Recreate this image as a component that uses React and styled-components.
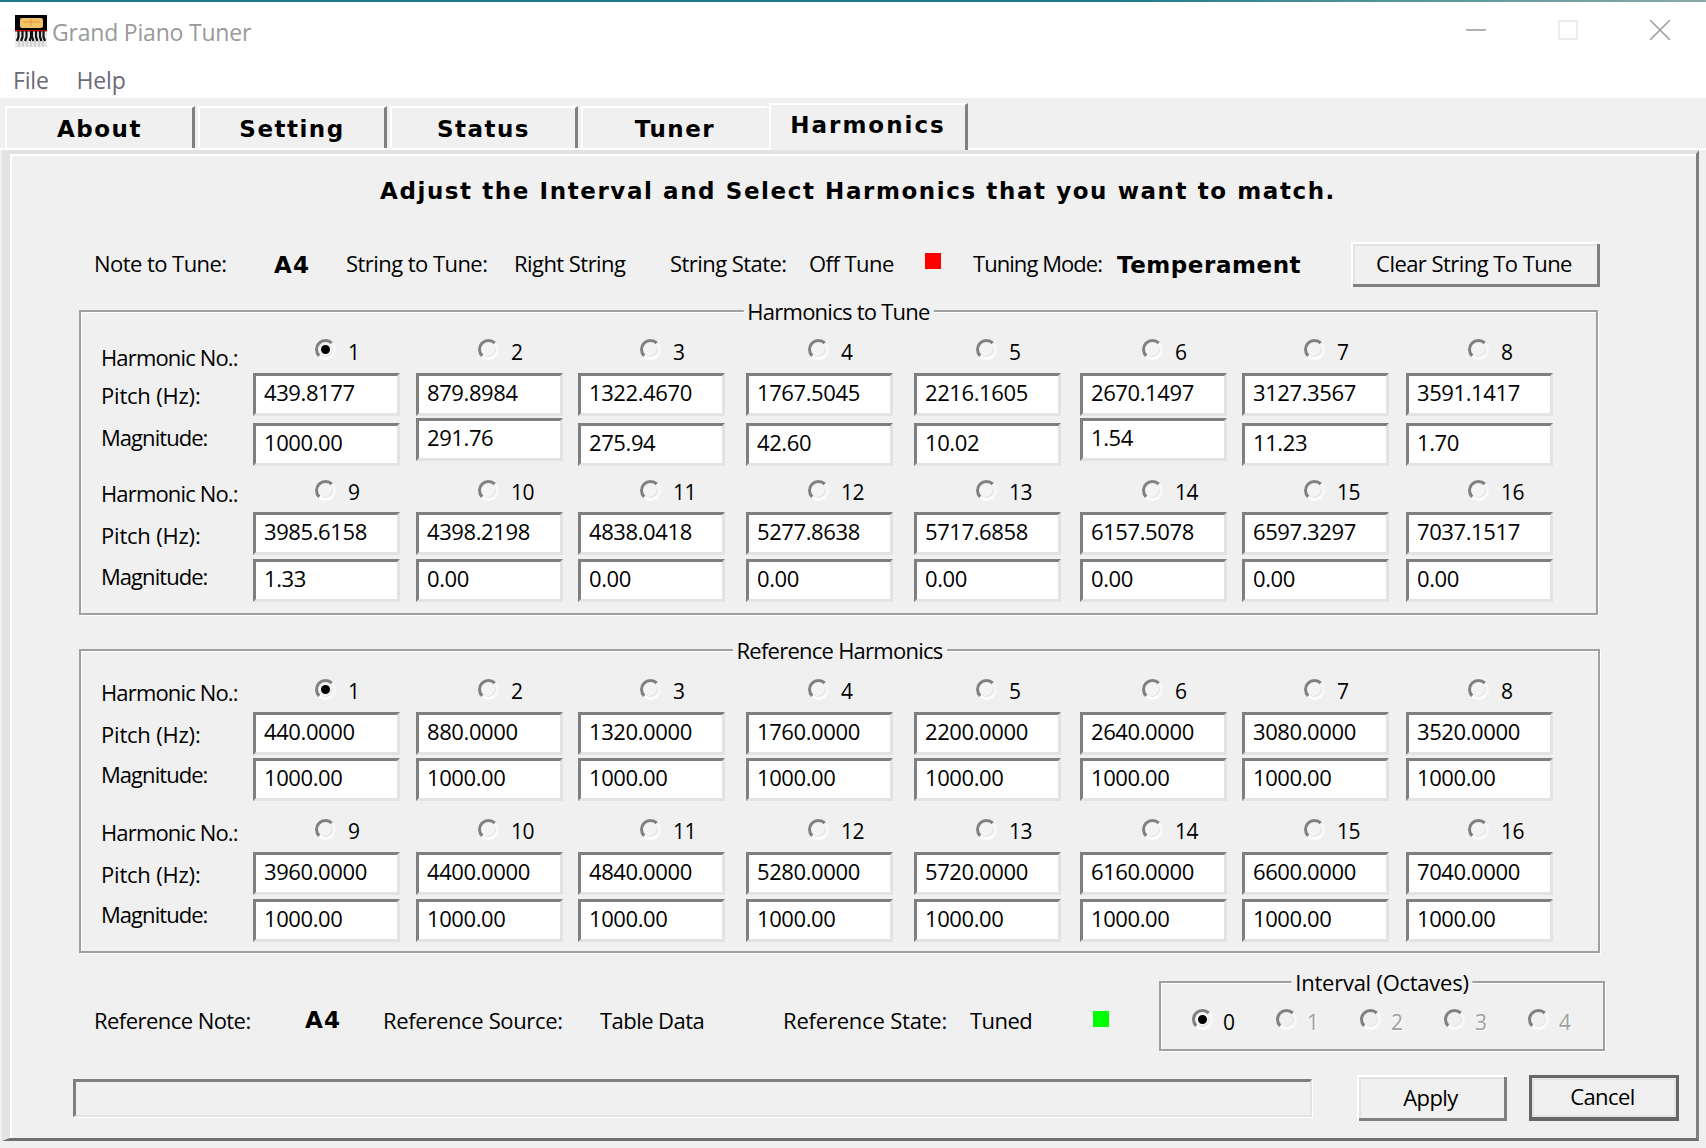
import React from "react";
import styled, { createGlobalStyle } from "styled-components";

const Global = createGlobalStyle`
  html, body { margin: 0; padding: 0; background: #f0f0f0; }
  body { width: 1706px; height: 1148px; overflow: hidden; font-family: "Open Sans", "Liberation Sans", sans-serif; color: #000; }
  * { box-sizing: border-box; }
`;

const TopStrip = styled.div`
  height: 2px;
  background: linear-gradient(90deg, #1c7a8c 0%, #1c7a8c 65%, #4a8f97 78%, #8aa9a8 100%);
`;
const TitleRow = styled.div`
  height: 60px; background: #fff; display: flex; align-items: flex-start; padding: 13px 36px 0 15px;
`;
const AppTitle = styled.div`
  margin-left: 5px; font-size: 23px; line-height: 34px; color: #999; letter-spacing: -0.2px;
`;
const Controls = styled.div`
  margin-left: auto; display: flex; gap: 72px; padding-top: 5px;
`;
const MenuRow = styled.div`
  height: 36px; background: #fff; display: flex; gap: 28px; padding-left: 13px; align-items: center;
`;
const MenuItem = styled.span` font-size: 23px; color: #6a6a78; letter-spacing: -0.2px; `;

const TabBar = styled.div`
  height: 52px; display: flex; align-items: flex-end; padding-left: 5px; border-bottom: 2px solid #fff; position: relative;
`;
const Tab = styled.div`
  width: ${p => p.$w}px; height: ${p => (p.$active ? 47 : 42)}px; margin-right: ${p => p.$gap}px;
  margin-bottom: ${p => (p.$active ? -2 : 0)}px; padding-bottom: ${p => (p.$active ? 5 : 0)}px; padding-top: ${p => (p.$active ? 0 : 2)}px;
  position: relative; z-index: 1;
  background: #f0f0f0;
  border-top: 2px solid #fff; border-left: 2px solid #fff;
  border-right: ${p => (p.$plain ? "0" : "3px solid #808080")};
  display: flex; align-items: center; justify-content: center;
  font-family: "DejaVu Sans", sans-serif; font-weight: 700; font-size: 23px; letter-spacing: ${p => (p.$active ? 2 : 1.5)}px;
`;

const Panel = styled.div`
  margin-left: 2px; width: 1697px; height: 991px;
  border-left: 8px solid #e3e3e3; border-top: 4px solid #e3e3e3;
  border-right: 3px solid #808080; border-bottom: 3px solid #6e6e6e;
  box-shadow: inset 2px 2px 0 #fff;
  display: flex; flex-direction: column;
`;
const Heading = styled.div`
  height: 88px; padding-top: 17px; margin-left: 370px; font-family: "DejaVu Sans", sans-serif; font-weight: 700;
  font-size: 23px; line-height: 40px; letter-spacing: 1.58px; white-space: nowrap;
`;
const InfoRow = styled.div`
  display: grid; grid-template-columns: ${p => p.$cols}; align-items: center; padding-left: 84px; height: ${p => p.$h}px;
  margin-top: ${p => p.$mt || 0}px;
`;
const Text = styled.div`
  font-size: 22px; line-height: 30px; letter-spacing: ${p => (p.$ls !== undefined ? p.$ls : -0.55)}px; white-space: nowrap; margin-top: ${p => p.$top || 0}px;
`;
const Strong = styled.div`
  font-family: "DejaVu Sans", sans-serif; font-weight: 700; font-size: 23px; line-height: 30px;
  letter-spacing: ${p => (p.$ls !== undefined ? p.$ls : 1.1)}px; white-space: nowrap; margin-top: ${p => p.$top || 0}px;
`;
const Lamp = styled.div`
  width: 16px; height: 16px; background: ${p => p.$color}; margin-top: ${p => p.$top || 0}px;
`;
const Button = styled.div`
  width: ${p => p.$w}px; height: ${p => p.$h}px; margin-left: ${p => p.$ml || 0}px;
  display: flex; align-items: center; justify-content: center; background: #f0f0f0;
  font-size: 22px; letter-spacing: -0.55px; padding-bottom: 3px; padding-right: 3px;
  border: ${p => (p.$default ? "3px solid #666" : "0")};
  border-bottom-width: ${p => (p.$default ? 4 : 0)}px;
  box-shadow: ${p => (p.$default
    ? "inset 2px 2px 0 #e3e3e3, inset -2px -2px 0 #e3e3e3"
    : "inset 2px 2px 0 #fff, inset -3px -3px 0 #808080, inset 4px 4px 0 #e3e3e3")};
`;
const Group = styled.div`
  position: relative; margin-left: 69px; width: ${p => p.$w}px; margin-top: ${p => p.$mt}px;
  border: 2px solid #a0a0a0; box-shadow: 1px 1px 0 #fff, inset 1px 1px 0 #fff;
  padding: ${p => p.$pt}px 0 ${p => p.$pb}px 20px;
`;
const Legend = styled.div`
  position: absolute; left: 50%; top: -16px; transform: translateX(-50%);
  background: #f0f0f0; padding: 0 4px; font-size: 22px; line-height: 30px; letter-spacing: ${p => (p.$ls !== undefined ? p.$ls : -0.75)}px; white-space: nowrap;
`;
const Block = styled.div`
  display: grid; margin-top: ${p => p.$mt || 0}px;
  grid-template-columns: 152px 163px 162px 168px 168px 166px 162px 164px 147px;
  grid-template-rows: 38px ${p => p.$pitch}px ${p => p.$mag}px;
`;
const RowLabel = styled(Text)` align-self: start; `;
const RadioCell = styled.div`
  display: flex; align-items: flex-start; padding-left: 62px; padding-top: ${p => p.$top}px; gap: 12px;
`;
const Radio = styled.input.attrs({ type: "radio", readOnly: true, tabIndex: -1 })`
  appearance: none; margin: 0; flex: none; width: 21px; height: 21px; border-radius: 50%; background: ${p => (p.disabled ? "#f0f0f0" : "#f4f4f4")};
  border: 3px solid; border-color: #808080 #f8f8f8 #fdfdfd #808080; position: relative;
  box-shadow: inset -1px -1px 0 #e3e3e3;
  &:checked::after {
    content: ""; position: absolute; left: 3px; top: 3px; width: 9px; height: 9px; border-radius: 50%; background: #000;
  }
`;
const RadioLabel = styled.span`
  font-size: 21px; line-height: 27px; letter-spacing: -0.4px; min-width: 20px; margin-top: ${p => p.$top || 0}px;
  color: ${p => (p.$off ? "#a0a0a0" : "#000")}; text-shadow: ${p => (p.$off ? "1px 1px 0 #fff" : "none")};
`;
const Field = styled.input.attrs({ readOnly: true, tabIndex: -1 })`
  width: 147px; height: 43px; margin: 0; margin-top: ${p => (p.$lift ? -5 : 0)}px; align-self: start;
  background: #fff; outline: none; font-family: inherit; font-size: 22px; color: #000; letter-spacing: -0.4px;
  border: 3px solid; border-color: #7f7f7f #e3e3e3 #e3e3e3 #7f7f7f;
  padding: 0 0 6px 8px;
`;
const IntervalBox = styled.div`
  position: relative; width: 446px; height: 70px; border: 2px solid #a0a0a0; box-shadow: 1px 1px 0 #fff, inset 1px 1px 0 #fff;
  display: flex; padding: 26px 0 0 31px; margin-left: -1px;
`;
const IntervalItem = styled.div`
  flex: none; width: 84px; display: flex; gap: 10px; align-items: flex-start;
`;
const StatusRow = styled.div`
  display: flex; align-items: center; margin-top: 25px; padding-left: 63px;
`;
const StatusBox = styled.div`
  width: 1239px; height: 38px; border: 2px solid #e3e3e3; border-top: 3px solid #7f7f7f; border-left: 3px solid #7f7f7f;
  box-shadow: 1px 1px 0 #fff;
`;

const Icon = () => (
  <svg width="32" height="32" viewBox="0 0 32 32">
    <rect width="32" height="32" fill="#e9e9e9" />
    <rect width="32" height="15" fill="#000" />
    <rect x="5" y="3" width="23" height="10" rx="2" fill="#f6c268" />
    <path d="M8 7H25M16 4V11" stroke="#d89a3c" strokeWidth="1" />
    <rect y="15" width="32" height="1.5" fill="#c00000" />
    {[2, 6, 10, 14.5, 18.5, 22.5, 26.5, 30].map((x, i) => (
      <path key={i} d={`M${x + (x < 16 ? 1.5 : -1.5)} 16V22L${x} 26`} stroke="#111" strokeWidth="2.2" fill="none" />
    ))}
    {[4, 8, 12, 16, 20, 24, 28].map(x => (
      <path key={x} d={`M${x} 26V32`} stroke="#bbb" strokeWidth="1" />
    ))}
  </svg>
);

const P1 = ["439.8177","879.8984","1322.4670","1767.5045","2216.1605","2670.1497","3127.3567","3591.1417","3985.6158","4398.2198","4838.0418","5277.8638","5717.6858","6157.5078","6597.3297","7037.1517"];
const M1 = ["1000.00","291.76","275.94","42.60","10.02","1.54","11.23","1.70","1.33","0.00","0.00","0.00","0.00","0.00","0.00","0.00"];
const P2 = Array.from({ length: 16 }, (_, i) => (440 * (i + 1)).toFixed(4));
const M2 = Array(16).fill("1000.00");

const HarmonicBlock = ({ start, pitch, data, radioTop, labelTop, tops, pitchRow, magRow, mt, checked }) => {
  const nums = Array.from({ length: 8 }, (_, i) => start + i);
  return (
    <Block $pitch={pitchRow} $mag={magRow} $mt={mt}>
      <RowLabel $top={tops[0]} $ls={-0.85}>Harmonic No.:</RowLabel>
      {nums.map(n => (
        <RadioCell key={n} $top={radioTop}>
          <Radio checked={n === checked} />
          <RadioLabel $top={labelTop}>{n}</RadioLabel>
        </RadioCell>
      ))}
      <RowLabel $top={tops[1]} $ls={-0.2}>Pitch (Hz):</RowLabel>
      {nums.map(n => <Field key={n} value={pitch[n - 1]} />)}
      <RowLabel $top={tops[2]} $ls={-0.95}>Magnitude:</RowLabel>
      {nums.map(n => <Field key={n} value={data[n - 1]} $lift={data === M1 && (n === 2 || n === 6)} />)}
    </Block>
  );
};

export default function App() {
  return (
    <>
      <Global />
      <TopStrip />
      <TitleRow>
        <Icon />
        <AppTitle>Grand Piano Tuner</AppTitle>
        <Controls>
          <svg width="20" height="20" viewBox="0 0 20 20"><path d="M0 10H20" stroke="#999" strokeWidth="1.5" /></svg>
          <svg width="20" height="20" viewBox="0 0 20 20"><rect x="1" y="1" width="18" height="18" fill="none" stroke="#ececec" strokeWidth="2" /></svg>
          <svg width="20" height="20" viewBox="0 0 20 20"><path d="M0 0L20 20M20 0L0 20" stroke="#999" strokeWidth="1.5" /></svg>
        </Controls>
      </TitleRow>
      <MenuRow>
        <MenuItem>File</MenuItem>
        <MenuItem>Help</MenuItem>
      </MenuRow>
      <TabBar>
        <Tab $w={190} $gap={3}>About</Tab>
        <Tab $w={189} $gap={3}>Setting</Tab>
        <Tab $w={188} $gap={3}>Status</Tab>
        <Tab $w={186} $gap={2} $plain>Tuner</Tab>
        <Tab $w={199} $gap={0} $active>Harmonics</Tab>
      </TabBar>
      <Panel>
        <Heading>Adjust the Interval and Select Harmonics that you want to match.</Heading>
        <InfoRow $h={45} $cols="180px 72px 168px 156px 139px 116px 48px 144px 234px 249px">
          <Text $top={-3}>Note to Tune:</Text>
          <Strong>A4</Strong>
          <Text $top={-3}>String to Tune:</Text>
          <Text $top={-3}>Right String</Text>
          <Text $top={-3}>String State:</Text>
          <Text $top={-3}>Off Tune</Text>
          <Lamp $color="#ff0000" $top={-8} />
          <Text $top={-3} $ls={-0.95}>Tuning Mode:</Text>
          <Strong $ls={0.55}>Temperament</Strong>
          <Button $w={249} $h={45}>Clear String To Tune</Button>
        </InfoRow>
        <Group $w={1519} $mt={23} $pt={23} $pb={10}>
          <Legend>Harmonics to Tune</Legend>
          <HarmonicBlock start={1} pitch={P1} data={M1} checked={1} radioTop={4} labelTop={0} tops={[7, 7, -1]} pitchRow={50} magRow={43} />
          <HarmonicBlock start={9} pitch={P1} data={M1} radioTop={6} labelTop={-1} tops={[4, 8, 2]} pitchRow={47} magRow={44} mt={8} />
        </Group>
        <Group $w={1521} $mt={34} $pt={23} $pb={10}>
          <Legend>Reference Harmonics</Legend>
          <HarmonicBlock start={1} pitch={P2} data={M2} checked={1} radioTop={5} labelTop={-1} tops={[3, 7, 1]} pitchRow={46} magRow={43} />
          <HarmonicBlock start={9} pitch={P2} data={M2} radioTop={5} labelTop={-1} tops={[3, 7, 0]} pitchRow={47} magRow={42} mt={13} />
        </Group>
        <InfoRow $h={69} $mt={28} $cols="211px 78px 217px 183px 187px 123px 67px 446px">
          <Text $top={8}>Reference Note:</Text>
          <Strong $top={8}>A4</Strong>
          <Text $top={8} $ls={-0.35}>Reference Source:</Text>
          <Text $top={8}>Table Data</Text>
          <Text $top={8} $ls={-0.2}>Reference State:</Text>
          <Text $top={8}>Tuned</Text>
          <Lamp $color="#00ff00" $top={5} />
          <IntervalBox>
            <Legend $ls={-0.25}>Interval (Octaves)</Legend>
            {[0, 1, 2, 3, 4].map(n => (
              <IntervalItem key={n}>
                <Radio checked={n === 0} disabled={n !== 0} />
                <RadioLabel $off={n !== 0}>{n}</RadioLabel>
              </IntervalItem>
            ))}
          </IntervalBox>
        </InfoRow>
        <StatusRow>
          <StatusBox />
          <Button $w={150} $h={46} $ml={45}>Apply</Button>
          <Button $w={150} $h={46} $ml={22} $default>Cancel</Button>
        </StatusRow>
      </Panel>
    </>
  );
}
